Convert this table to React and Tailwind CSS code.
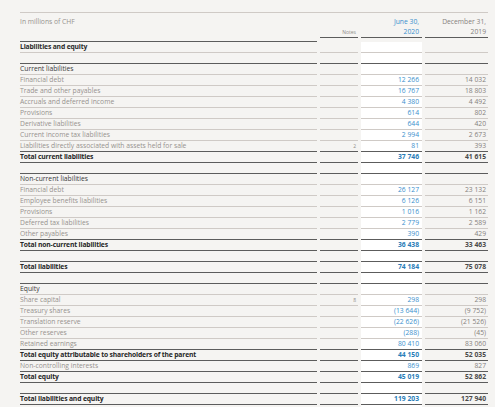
const sections = [
  {
    title: 'Current liabilities',
    items: [
      ['Financial debt', '', '12 266', '14 032'],
      ['Trade and other payables', '', '16 767', '18 803'],
      ['Accruals and deferred income', '', '4 380', '4 492'],
      ['Provisions', '', '614', '802'],
      ['Derivative liabilities', '', '644', '420'],
      ['Current income tax liabilities', '', '2 994', '2 673'],
      ['Liabilities directly associated with assets held for sale', '2', '81', '393'],
    ],
    totals: [['Total current liabilities', '', '37 746', '41 615']],
  },
  {
    title: 'Non-current liabilities',
    items: [
      ['Financial debt', '', '26 127', '23 132'],
      ['Employee benefits liabilities', '', '6 126', '6 151'],
      ['Provisions', '', '1 016', '1 162'],
      ['Deferred tax liabilities', '', '2 779', '2 589'],
      ['Other payables', '', '390', '429'],
    ],
    totals: [['Total non-current liabilities', '', '36 438', '33 463']],
  },
];

// flat list of rows, built by hand for the equity block
const rows = [];
rows.push({ kind: 'top', label: 'Liabilities and equity' });
rows.push({ kind: 'gap' });
sections.forEach((s) => {
  rows.push({ kind: 'section', label: s.title });
  s.items.forEach((r) => rows.push({ kind: 'item', cells: r }));
  s.totals.forEach((r) => rows.push({ kind: 'total', cells: r }));
  rows.push({ kind: 'gap' });
});
rows.push({ kind: 'total', cells: ['Total liabilities', '', '74 184', '75 078'] });
rows.push({ kind: 'gap' });
rows.push({ kind: 'section', label: 'Equity' });
[
  ['Share capital', '8', '298', '298'],
  ['Treasury shares', '', '(13 644)', '(9 752)'],
  ['Translation reserve', '', '(22 626)', '(21 526)'],
  ['Other reserves', '', '(288)', '(45)'],
  ['Retained earnings', '', '80 410', '83 060'],
].forEach((r) => rows.push({ kind: 'item', cells: r }));
rows.push({ kind: 'total', cells: ['Total equity attributable to shareholders of the parent', '', '44 150', '52 035'] });
rows.push({ kind: 'item', cells: ['Non-controlling interests', '', '869', '827'] });
rows.push({ kind: 'total', cells: ['Total equity', '', '45 019', '52 862'] });
rows.push({ kind: 'gap' });
rows.push({ kind: 'total', cells: ['Total liabilities and equity', '', '119 203', '127 940'] });
rows.push({ kind: 'end' });

const grid = 'grid grid-cols-[297px_38px_61px_63px] gap-x-[3px]';

function Row({ row, prev, next }) {
  if (row.kind === 'gap' || row.kind === 'end') {
    return (
      <div className={grid}>
        <div className={row.kind === 'gap' ? 'h-[10px]' : 'h-[8px]'} />
        <div />
        <div className="bg-white" />
        <div />
      </div>
    );
  }
  const dark = row.kind === 'total' || (next && next.kind === 'total');
  const topDark = prev && prev.kind === 'gap';
  const b = [
    'h-[10px] leading-[10px] box-content border-b',
    dark ? 'border-[#5c5c5c]' : 'border-[#cfcac6]',
    topDark ? 'border-t border-t-[#5c5c5c]' : '',
  ].join(' ');
  const total = row.kind === 'total';

  if (row.kind === 'top' || row.kind === 'section') {
    return (
      <div className={grid}>
        <div className={`${b} ${row.kind === 'top' ? 'font-bold tracking-[-0.15px] text-[#2b2b2b]' : 'font-medium text-[#3a3a3a]'}`}>{row.label}</div>
        <div className={b} />
        <div className={`${b} bg-white`} />
        <div className={b} />
      </div>
    );
  }

  const [label, note, cur, prevYear] = row.cells;
  return (
    <div className={grid}>
      <div className={`${b} whitespace-nowrap ${total ? 'font-bold tracking-[-0.15px] text-[#262626]' : 'text-[#96928e]'}`}>{label}</div>
      <div className={`${b} text-right pr-[2px] text-[5px] text-[#8f8b87]`}>{note}</div>
      <div className={`${b} bg-white text-right pr-[3px] ${total ? 'font-bold text-[#2a7db8]' : 'text-[#3a8fcd]'}`}>{cur.replace(/ /g, '\u00a0')}</div>
      <div className={`${b} text-right pr-[2px] ${total ? 'font-bold text-[#4a4a4a]' : 'text-[#85817d]'}`}>{prevYear.replace(/ /g, '\u00a0')}</div>
    </div>
  );
}

export default function App() {
  return (
    <div className="w-[495px] h-[407px] overflow-hidden bg-[#f5f4f2] pt-[12px] pl-[20px] text-[6.75px] font-['Open_Sans',sans-serif]">
      <div className="w-[468px] border-t border-[#cfcac6]">
        <div className={grid}>
          <div className="h-[24px] box-content border-b border-[#5c5c5c] pt-[4px] leading-[10px] text-[#96928e]">In millions of CHF</div>
          <div className="h-[24px] box-content border-b border-[#5c5c5c] flex items-end justify-end pr-[2px] leading-[10px] text-[5px] text-[#8f8b87]">Notes</div>
          <div className="h-[24px] box-content border-b border-[#5c5c5c] flex flex-col justify-end items-end pr-[3px] leading-[10px] text-[#3a8fcd]">
            <span>June 30,</span>
            <span>2020</span>
          </div>
          <div className="h-[24px] box-content border-b border-[#5c5c5c] flex flex-col justify-end items-end pr-[2px] leading-[10px] text-[#85817d]">
            <span>December 31,</span>
            <span>2019</span>
          </div>
        </div>
        {rows.map((row, i) => (
          <Row key={i} row={row} prev={rows[i - 1]} next={rows[i + 1]} />
        ))}
      </div>
    </div>
  );
}
